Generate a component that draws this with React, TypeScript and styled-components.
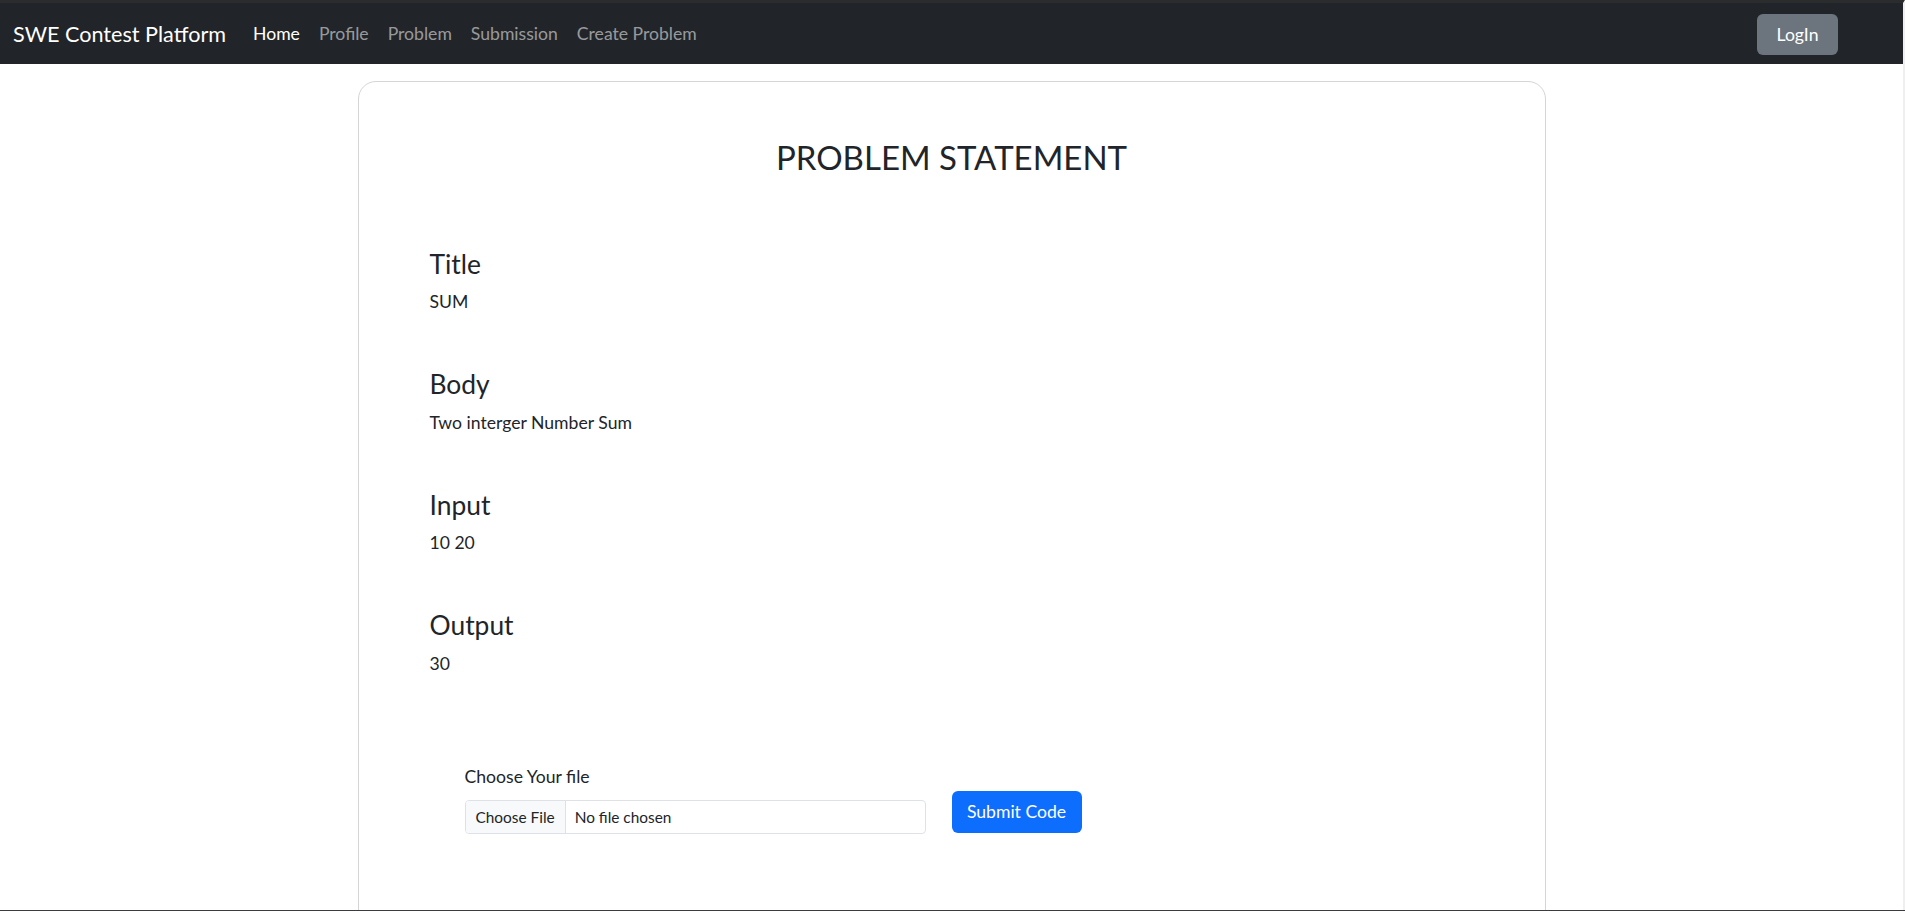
import React from "react";
import styled, { createGlobalStyle } from "styled-components";

const GlobalStyle = createGlobalStyle`
  * {
    box-sizing: border-box;
  }
  body {
    margin: 0;
    border-top: 3px solid #2b2c2e;
    border-right: 2px solid #efefef;
    font-family: Lato, "Noto Sans", sans-serif;
    font-size: 17.6px;
    line-height: 1.5;
    color: #212529;
    background: #fff;
  }
  body::after {
    content: "";
    position: fixed;
    left: 0;
    right: 0;
    bottom: 0;
    height: 1px;
    background: #3b3a3d;
  }
`;

const sections = [
  { label: "Title", value: "SUM" },
  { label: "Body", value: "Two interger Number Sum" },
  { label: "Input", value: "10 20" },
  { label: "Output", value: "30" },
];

const navLinks = ["Home", "Profile", "Problem", "Submission", "Create Problem"];

const App: React.FC = () => {
  return (
    <>
      <GlobalStyle />
      <Navbar>
        <Brand href="#">SWE Contest Platform</Brand>
        <NavList>
          {navLinks.map((link, index) => (
            <NavLink key={link} href="#" $active={index === 0}>
              {link}
            </NavLink>
          ))}
        </NavList>
        <LoginButton type="button">LogIn</LoginButton>
      </Navbar>

      <Card>
        <PageTitle>PROBLEM STATEMENT</PageTitle>
        <SectionList>
          {sections.map(({ label, value }) => (
            <Section key={label}>
              <SectionHeading>{label}</SectionHeading>
              <SectionValue>{value}</SectionValue>
            </Section>
          ))}
        </SectionList>

        <UploadRow>
          <FileGroup>
            <FileLabel htmlFor="code-file">Choose Your file</FileLabel>
            <FileInput id="code-file" type="file" />
          </FileGroup>
          <SubmitButton type="button">Submit Code</SubmitButton>
        </UploadRow>
      </Card>
    </>
  );
};

export default App;

const Navbar = styled.nav`
  display: flex;
  align-items: center;
  height: 61px;
  padding: 1px 13px 0;
  background-color: #212529;
`;

const Brand = styled.a`
  margin-right: 27px;
  font-size: 21.6px;
  color: #fff;
  text-decoration: none;
  white-space: nowrap;
`;

const NavList = styled.div`
  display: flex;
  align-items: center;
  gap: 19px;
  flex: 1;
`;

const NavLink = styled.a<{ $active?: boolean }>`
  font-size: 17.6px;
  color: ${({ $active }) => ($active ? "#fff" : "rgba(255, 255, 255, 0.55)")};
  text-decoration: none;
`;

const LoginButton = styled.button`
  width: 81px;
  height: 41px;
  margin-right: 52px;
  padding: 0;
  border: none;
  border-radius: 6px;
  background-color: #6c757d;
  color: #fff;
  font-family: inherit;
  font-size: 17.6px;
`;

const Card = styled.main`
  width: 1188px;
  margin: 17px auto 0;
  padding: 56px 71px 120px;
  border: 1px solid #d5d5d5;
  border-radius: 18px;
`;

const PageTitle = styled.h2`
  margin: 0 0 71px;
  font-size: 33px;
  font-weight: 400;
  line-height: 1.2;
  text-align: center;
`;

const SectionList = styled.div`
  display: flex;
  flex-direction: column;
  gap: 53.5px;
`;

const Section = styled.section`
  display: flex;
  flex-direction: column;
  gap: 9px;
`;

const SectionHeading = styled.h4`
  margin: 0;
  font-size: 26.4px;
  font-weight: 400;
  line-height: 1.2;
`;

const SectionValue = styled.p`
  margin: 0;
  font-size: 17.6px;
  line-height: 1.5;
`;

const UploadRow = styled.div`
  display: flex;
  align-items: flex-end;
  gap: 26px;
  margin-top: 87px;
  padding-left: 35px;
`;

const FileGroup = styled.div`
  display: flex;
  flex-direction: column;
  gap: 9px;
  width: 461px;
`;

const FileLabel = styled.label`
  font-size: 17.6px;
  line-height: 1.5;
`;

const FileInput = styled.input`
  height: 34px;
  padding: 4px 9px;
  border: 1px solid #dee2e6;
  border-radius: 4px;
  font-family: inherit;
  font-size: 15.4px;
  line-height: 1.5;
  color: #212529;
  overflow: hidden;

  &::file-selector-button {
    height: 34px;
    margin: -5px 9px -5px -9px;
    padding: 0 10px;
    border: none;
    border-right: 1px solid #dee2e6;
    border-radius: 0;
    background-color: #f8f9fa;
    color: #212529;
    font-family: inherit;
    font-size: 15.4px;
  }
`;

const SubmitButton = styled.button`
  width: 130px;
  height: 42px;
  margin-bottom: 1px;
  padding: 0;
  border: none;
  border-radius: 6px;
  background-color: #0d6efd;
  color: #fff;
  font-family: inherit;
  font-size: 17.6px;
`;
